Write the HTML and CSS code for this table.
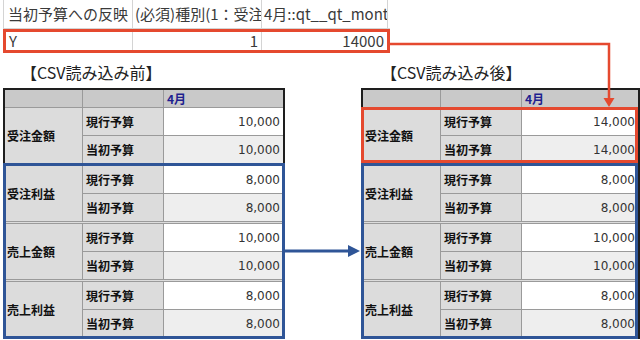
FILE: index.html
```html
<!DOCTYPE html>
<html lang="ja">
<head>
<meta charset="utf-8">
<title>CSV読み込み</title>
<link rel="stylesheet" href="styles.css">
</head>
<body>
<div class="sheet">
  <div class="sheet-head">
    <div class="cell c1">当初予算への反映</div>
    <div class="cell">(必須)種別(1：受注金額、2：受注利益)</div>
    <div class="cell">4月::qt__qt_monthly_budget</div>
  </div>
  <div class="sheet-data">
    <div class="cell">Y</div>
    <div class="cell num">1</div>
    <div class="cell num">14000</div>
  </div>
</div>

<div class="panels">
  <section class="panel before">
    <h2 class="caption">【CSV読み込み前】</h2>
    <div class="table">
      <div class="thead"><div class="th"></div><div class="th"></div><div class="th month">4月</div></div>
      <div class="group">
        <div class="label">受注金額</div>
        <div class="sub r1">現行予算</div><div class="val r1">10,000</div>
        <div class="sub">当初予算</div><div class="val alt">10,000</div>
      </div>
      <div class="hl hl-blue">
        <div class="group sep">
          <div class="label">受注利益</div>
          <div class="sub r1">現行予算</div><div class="val r1">8,000</div>
          <div class="sub">当初予算</div><div class="val alt">8,000</div>
        </div>
        <div class="group sep">
          <div class="label">売上金額</div>
          <div class="sub r1">現行予算</div><div class="val r1">10,000</div>
          <div class="sub">当初予算</div><div class="val alt">10,000</div>
        </div>
        <div class="group sep">
          <div class="label">売上利益</div>
          <div class="sub r1">現行予算</div><div class="val r1">8,000</div>
          <div class="sub">当初予算</div><div class="val alt">8,000</div>
        </div>
      </div>
    </div>
  </section>

  <section class="panel after">
    <h2 class="caption">【CSV読み込み後】</h2>
    <div class="table">
      <div class="thead"><div class="th"></div><div class="th"></div><div class="th month">4月</div></div>
      <div class="hl hl-red">
        <div class="group">
          <div class="label">受注金額</div>
          <div class="sub r1">現行予算</div><div class="val r1">14,000</div>
          <div class="sub">当初予算</div><div class="val alt">14,000</div>
        </div>
      </div>
      <div class="hl hl-blue">
        <div class="group sep">
          <div class="label">受注利益</div>
          <div class="sub r1">現行予算</div><div class="val r1">8,000</div>
          <div class="sub">当初予算</div><div class="val alt">8,000</div>
        </div>
        <div class="group sep">
          <div class="label">売上金額</div>
          <div class="sub r1">現行予算</div><div class="val r1">10,000</div>
          <div class="sub">当初予算</div><div class="val alt">10,000</div>
        </div>
        <div class="group sep">
          <div class="label">売上利益</div>
          <div class="sub r1">現行予算</div><div class="val r1">8,000</div>
          <div class="sub">当初予算</div><div class="val alt">8,000</div>
        </div>
      </div>
    </div>
  </section>
</div>

<svg class="links" width="640" height="340" viewBox="0 0 640 340" aria-hidden="true">
  <path d="M390 44 H609 V99" fill="none" stroke="#e5492f" stroke-width="2.5"/>
  <polygon points="603.5,98 614.5,98 609,107" fill="#e5492f"/>
  <path d="M285 251 H349" fill="none" stroke="#2f5597" stroke-width="3"/>
  <polygon points="348,245 360,251 348,257" fill="#2f5597"/>
</svg>
</body>
</html>
```

FILE: styles.css
```css
* { box-sizing: border-box; }

body {
  margin: 0;
  width: 640px;
  height: 340px;
  overflow: hidden;
  position: relative;
  background: #fff;
  font-family: "Noto Sans CJK JP", "Noto Sans", sans-serif;
}

/* spreadsheet strip */
.sheet {
  margin-left: 3px;
  width: 387px;
  font-size: 15px;
  color: #3a3a3a;
}
.sheet-head {
  display: grid;
  grid-template-columns: 129px 129px 127px;
  height: 29px;
  border-bottom: 1px solid #d4d4d4;
}
.sheet-head .cell {
  border-left: 1px solid #d4d4d4;
  line-height: 28px;
  white-space: nowrap;
  overflow: hidden;
  padding-left: 2px;
}
.sheet-head .c1 { padding-left: 4px; }
.sheet-head .cell:last-child { border-right: 1px solid #d4d4d4; }

.sheet-data {
  display: grid;
  grid-template-columns: 126px 129px 1fr;
  height: 24px;
  border: 3px solid #e5492f;
}
.sheet-data .cell {
  line-height: 18px;
  padding: 0 3px;
  white-space: nowrap;
}
.sheet-data .num {
  text-align: right;
  border-left: 1px solid #d4d4d4;
}

/* panels */
.panels {
  display: flex;
  gap: 76px;
  margin-top: 8px;
  padding-left: 3px;
}
.panel.before { width: 282px; }
.panel.after { width: 279px; }

.caption {
  margin: 0 0 5px;
  height: 22px;
  line-height: 22px;
  font-size: 16px;
  font-weight: 400;
  color: #222;
  padding-left: 18px;
  white-space: nowrap;
}
.after .caption { padding-left: 20px; }

.table {
  border: 2px solid #1e1e1e;
  font-size: 12px;
  color: #111;
}
.thead {
  display: grid;
  grid-template-columns: 78px 81px 1fr;
  height: 18px;
  background: #c9c9c9;
  border-bottom: 1px solid #9a9a9a;
}
.th { border-right: 1px solid #9a9a9a; }
.th.month {
  border-right: 0;
  padding-left: 3px;
  line-height: 17px;
  font-weight: 700;
  color: #1f1f8f;
}

.group {
  display: grid;
  grid-template-columns: 78px 81px 1fr;
  grid-template-rows: 28px 27px;
  background: #dcdcdc;
}
.group.sep { border-top: 3px double #9a9a9a; }

.label {
  grid-row: 1 / span 2;
  border-right: 1px solid #9a9a9a;
  display: flex;
  align-items: center;
  padding-left: 2px;
  font-weight: 700;
}
.sub {
  border-right: 1px solid #9a9a9a;
  display: flex;
  align-items: center;
  padding-left: 3px;
  font-weight: 700;
}
.val {
  display: flex;
  align-items: center;
  justify-content: flex-end;
  padding-right: 3px;
  background: #fff;
  font-family: "DejaVu Sans", sans-serif;
  color: #333;
}
.val.alt { background: #eeeeee; }
.r1 { border-bottom: 1px solid #9a9a9a; }

/* highlight boxes */
.hl { position: relative; }
.hl::after {
  content: "";
  position: absolute;
  top: 0;
  left: -2px;
  right: -2px;
  bottom: -2px;
  border: 3px solid;
  pointer-events: none;
}
.hl-blue::after { border-color: #2f5597; }
.hl-red::after { border-color: #e5492f; top: -1px; bottom: 0; }
.after .hl::after { right: 0; }

.links {
  position: absolute;
  top: 0;
  left: 0;
  pointer-events: none;
}
```
